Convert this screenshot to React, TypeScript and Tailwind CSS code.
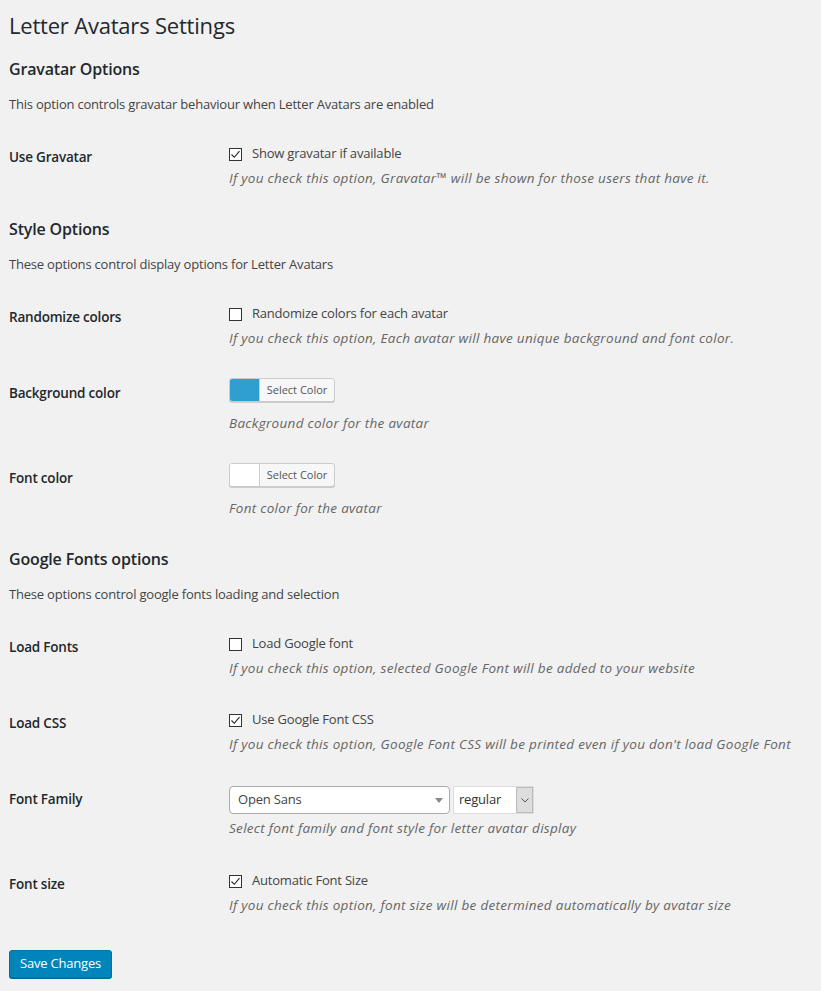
import React from 'react'

const font = { fontFamily: '"Open Sans", "Noto Sans", sans-serif' }

const Checkbox: React.FC<{ checked?: boolean }> = ({ checked }) => (
  <span className="w-[13px] h-[13px] border border-[#333] bg-white flex items-center justify-center shrink-0">
    {checked && (
      <svg width="11" height="11" viewBox="0 0 11 11" fill="none">
        <polyline points="1.5,5.5 4.3,8.3 9.5,2.2" stroke="#222" strokeWidth="1.1" />
      </svg>
    )}
  </span>
)

const Description: React.FC<{ children: React.ReactNode }> = ({ children }) => (
  <p className="mt-[4px] text-[13.5px] leading-[20px] italic tracking-[0.3px] text-[#666]">{children}</p>
)

const Row: React.FC<{ label: string; children: React.ReactNode; labelPad?: string; className?: string }> = ({
  label,
  children,
  labelPad,
  className,
}) => (
  <div className={`flex ${className ?? ''}`}>
    <div
      className={`w-[220px] shrink-0 ${labelPad ?? 'pt-[19px]'} text-[13.5px] leading-[18px] font-semibold tracking-[-0.2px] text-[#23282d]`}
    >
      {label}
    </div>
    <div className="py-[15px]">{children}</div>
  </div>
)

const CheckRow: React.FC<{ label: string; text: string; desc: string; checked?: boolean; className?: string }> = ({
  label,
  text,
  desc,
  checked,
  className,
}) => (
  <Row label={label} className={className}>
    <label className="flex items-center h-[20px] text-[13px] tracking-[-0.2px] text-[#444]">
      <Checkbox checked={checked} />
      <span className="ml-[10px]">{text}</span>
    </label>
    <Description>{desc}</Description>
  </Row>
)

const ColorButton: React.FC<{ swatch: string }> = ({ swatch }) => (
  <div className="flex h-[24px] w-[106px] mb-[11px] border border-[#ccc] rounded-[3px] overflow-hidden bg-[#f7f7f7] shadow-[0_1px_0_#ccc]">
    <span className={`w-[30px] h-full border-r border-[#ccc] ${swatch}`} />
    <span className="flex-1 flex items-center justify-center text-[11px] text-[#555]">Select Color</span>
  </div>
)

const SectionHeader: React.FC<{ title: string; desc: string; first?: boolean }> = ({ title, desc, first }) => (
  <>
    <h2
      className={`${first ? 'mt-[18px]' : 'mt-[15px]'} text-[16px] leading-[22px] font-semibold tracking-[-0.17px] text-[#23282d]`}
    >
      {title}
    </h2>
    <p className="mt-[14px] mb-[15px] text-[13px] leading-[20px] tracking-[-0.2px] text-[#444]">{desc}</p>
  </>
)

export default function App() {
  return (
    <div className="min-h-screen bg-[#f1f1f1] pl-[9px] pt-[10px] pb-[14px]" style={font}>
      <h1 className="text-[22px] leading-[30px] font-normal tracking-[-0.2px] text-[#23282d]">Letter Avatars Settings</h1>

      <SectionHeader first title="Gravatar Options" desc="This option controls gravatar behaviour when Letter Avatars are enabled" />
      <CheckRow
        label="Use Gravatar"
        text="Show gravatar if available"
        desc="If you check this option, Gravatar™ will be shown for those users that have it."
        checked
      />

      <SectionHeader title="Style Options" desc="These options control display options for Letter Avatars" />
      <CheckRow
        label="Randomize colors"
        text="Randomize colors for each avatar"
        desc="If you check this option, Each avatar will have unique background and font color."
      />
      <Row label="Background color" labelPad="pt-[21px]">
        <ColorButton swatch="bg-[#2e9fd0]" />
        <Description>Background color for the avatar</Description>
      </Row>
      <Row label="Font color" labelPad="pt-[21px]">
        <ColorButton swatch="bg-white" />
        <Description>Font color for the avatar</Description>
      </Row>

      <SectionHeader title="Google Fonts options" desc="These options control google fonts loading and selection" />
      <CheckRow
        label="Load Fonts"
        text="Load Google font"
        desc="If you check this option, selected Google Font will be added to your website"
      />
      <CheckRow
        label="Load CSS"
        text="Use Google Font CSS"
        desc="If you check this option, Google Font CSS will be printed even if you don't load Google Font"
        checked
        className="mt-[2px]"
      />
      <Row label="Font Family" labelPad="pt-[21px]" className="mb-[3px]">
        <div className="flex items-center gap-[3px] my-[2px]">
          <div className="w-[221px] h-[28px] border border-[#aaa] rounded-[4px] bg-white flex items-center justify-between pl-[8px] pr-[6px] text-[13px] tracking-[-0.2px] text-[#444]">
            <span>Open Sans</span>
            <svg width="8" height="5" viewBox="0 0 8 5">
              <polygon points="0,0 8,0 4,5" fill="#888" />
            </svg>
          </div>
          <div className="w-[81px] h-[28px] border border-[#ddd] bg-white flex items-stretch text-[13px] tracking-[-0.2px] text-[#333]">
            <span className="flex-1 flex items-center pl-[5px]">regular</span>
            <span className="w-[17px] bg-[#ddd] border border-[#bbb] flex items-center justify-center">
              <svg width="8" height="5" viewBox="0 0 8 5" fill="none">
                <polyline points="0.5,0.5 4,4 7.5,0.5" stroke="#555" strokeWidth="1" />
              </svg>
            </span>
          </div>
        </div>
        <Description>Select font family and font style for letter avatar display</Description>
      </Row>
      <CheckRow
        label="Font size"
        text="Automatic Font Size"
        desc="If you check this option, font size will be determined automatically by avatar size"
        checked
      />

      <button className="mt-[20px] h-[28px] px-[10px] bg-[#0085ba] border border-[#0073aa] rounded-[3px] text-[13px] tracking-[-0.2px] text-white shadow-[0_1px_0_#006799]">
        Save Changes
      </button>
    </div>
  )
}
